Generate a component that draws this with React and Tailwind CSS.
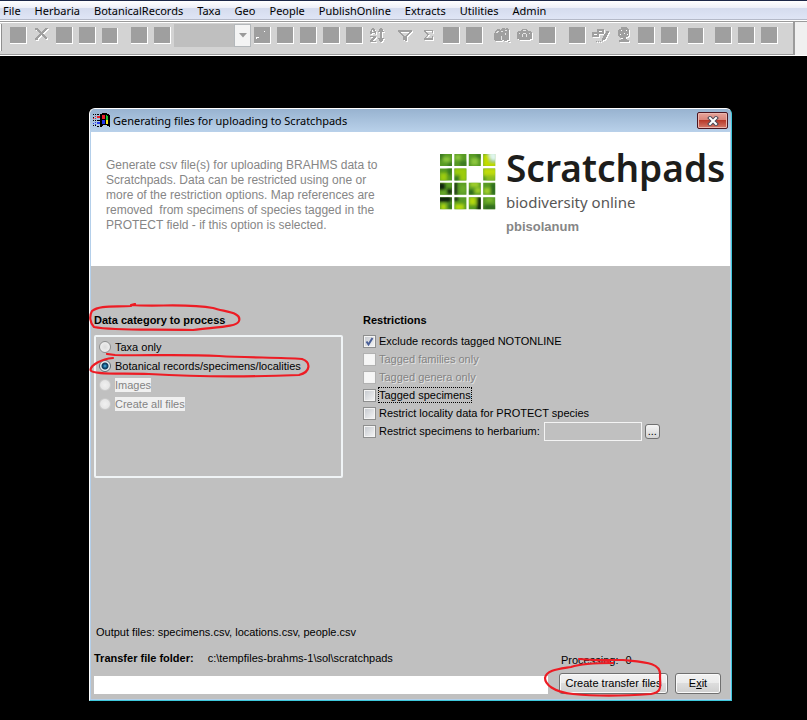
import React from "react";

const MENU = ["File", "Herbaria", "BotanicalRecords", "Taxa", "Geo", "People", "PublishOnline", "Extracts", "Utilities", "Admin"];

/* Disabled glyphs are drawn twice: a white copy one pixel down-right, then the grey one. */
const GLYPHS = {
  cut: <path d="M2 1h3v1h1v1h1v1h1v1h1V4h1V3h1V2h1V1h3v1h-1v1h-1v1h-1v1h-1v1h-1v1h1v1h1v1h1v1h1v2h-2v-1h-1v-1h-1V9h-1V8H8v1H7v1H6v1H5v2H2v-2h1v-1h1V9h1V8h1V7h1V6H6V5H5V4H4V3H2z" fill="currentColor" />,
  sort: (
    <g fill="currentColor">
      <path d="M3 1h2v1h1v2h1v3H6V6H3v1H1V4h1V2h1zM4 3H3v2h2V4H4z" />
      <path d="M1 9h6v2H6v1H5v1H4v1h3v1H1v-2h1v-1h1v-1h1v-1H1z" />
      <path d="M11 1h2v1h1v2h1v1h-2v6h2v1h-1v2h-1v1h-2v-1h-1v-2H9v-1h2V5H9V4h1V2h1z" />
    </g>
  ),
  funnel: <path d="M1 3h14v2h-1v1h-1v1h-1v1h-1v1h-1v5H8v-1H6V9H5V8H4V7H3V6H2V5H1zM4 5v1h1v1h1v1h1v1h2V8h1V7h1V6h1V5z" fill="currentColor" fillRule="evenodd" />,
  sigma: <path d="M4 3h9v3h-1V4H6v1h1v1h1v1h1v1H8v1H7v1H6v1h6V9h1v4H4v-2h1v-1h1V9h1V7H6V6H5V5H4z" fill="currentColor" />,
  find: (
    <g fill="currentColor">
      <path d="M1 6h1V4h1V3h1V2h3v1h1V2h1V1h3v1h1V1h2v1h1v11h-2v1h-3v-1H9v1H2v-1H1z" />
      <path d="M3 5h1V4h2v1H5v1H3zM8 5V4h2v1zM12 4V3h2v1zM8 9h1v4H8zM12 6h1v2h-1z" fill="#e4e4e4" />
      <path d="M15 14h2v1h-2z" />
    </g>
  ),
  camera: (
    <g fill="currentColor">
      <path d="M1 5h1V4h3V3h1V2h5v1h1v1h3v1h1v7h-2v1H3v-1H1z" />
      <path d="M7 6h3v1H7zM6 7h1v3H6zM10 7h1v3h-1zM3 6h1v1H3zM13 6h1v1h-1zM7 3h3v1H7z" fill="#e4e4e4" />
    </g>
  ),
  edit: (
    <g fill="currentColor">
      <path d="M5 2h7v5H7v3H0V5h5zM7 4v1h3V4zM2 7v1h3V7z" fillRule="evenodd" />
      <path d="M14 4h3v2h-1v2h-1v2h-1v2h-1v1h-2v1h-1v-3h1V9h1V7h1V6h1zM4 14h1v1H4zM6 14h1v1H6zM8 14h1v1H8z" />
    </g>
  ),
  globe: (
    <g fill="currentColor">
      <path d="M6 0h6v1h1v1h1v7h-1v1h-2v2h1v1h2v2H4v-2h2v-1h2v-1H5v-1H4V9H3V3h1V2h2z" />
      <path d="M6 3h1v1H6zM11 3h1v1h-1zM9 6h1v1H9zM5 7h1v1H5zM12 7h1v1h-1z" fill="#fff" />
    </g>
  ),
};

const TOOL_GROUPS = [
  { gap: "ml-[8px]", items: ["box", "cut", "box", "box", "small"] },
  { gap: "ml-[12px]", items: ["box", "box"] },
  { gap: "ml-[3px]", items: ["combo"] },
  { gap: "ml-[3px]", items: ["dots", "box", "box", "box", "box", "sort"] },
  { gap: "ml-[11px]", items: ["funnel", "sigma", "box", "box"] },
  { gap: "ml-[10px]", items: ["find", "camera", "box"] },
  { gap: "ml-[13px]", items: ["box", "edit", "globe", "box", "box"] },
  { gap: "ml-[10px]", items: ["small"] },
  { gap: "ml-[10px]", items: ["box", "box", "box"] },
];

function Tool({ kind }) {
  if (kind === "combo") {
    return (
      <div className="flex h-[23px] w-[77px] bg-[#bfbfbf]">
        <button disabled aria-label="Open list" className="ml-auto flex w-[17px] items-center justify-center border border-[#b4b8bb] bg-[#f4f4f4]">
          <svg width="8" height="5" viewBox="0 0 8 5"><path d="M0 0h8L4 4.500z" fill="#9a9a9a" /></svg>
        </button>
      </div>
    );
  }
  if (GLYPHS[kind]) {
    return (
      <button disabled aria-label={kind} className="h-[17px] w-[17px]">
        <svg width="17" height="17" viewBox="0 0 17 17" shapeRendering="crispEdges" className="overflow-visible">
          <g transform="translate(1 1)" className="text-white">{GLYPHS[kind]}</g>
          <g className="text-[#9f9f9f]">{GLYPHS[kind]}</g>
        </svg>
      </button>
    );
  }
  return (
    <button disabled aria-label="Tool" className="flex h-[17px] w-[17px] items-end">
      <span className={(kind === "small" ? "h-[16px] w-[16px]" : "h-[17px] w-[17px]") + " block border-r border-b border-white bg-[#9f9f9f]"}>
        {kind === "dots" && (
          <svg width="16" height="16" viewBox="0 0 16 16"><path d="M2 10h3v1H3v1H2zM10 4h1v1h-1z" fill="#fff" /></svg>
        )}
      </span>
    </button>
  );
}

function WindowsIcon() {
  return (
    <svg width="17" height="15" viewBox="0 0 17 15" shapeRendering="crispEdges">
      <path d="M7 1h2V0h5v1h2v1h1v12h-1v-1h-2v-1h-4v1H9v1H7z" fill="#000" />
      <path d="M9 2h3v4H9z" fill="#e8202a" />
      <path d="M13 2h1v1h1v4h-2z" fill="#1fc437" />
      <path d="M9 7h3v4H9z" fill="#2438e8" />
      <path d="M13 7h2v4h-2z" fill="#f6e81c" />
      <path d="M0 1h1v1H0zM2 1h1v1H2zM4 1h2v1H4zM0 4h1v1H0zM0 7h1v1H0zM2 7h1v1H2zM4 7h3v1H4zM0 12h1v1H0zM2 12h1v1H2zM4 13h2v1H4z" fill="#000" />
      <path d="M2 3h1v1H2zM4 3h3v2H4zM0 5h1v1H0zM2 5h1v1H2z" fill="#e8202a" />
      <path d="M2 9h1v1H2zM4 9h3v2H4zM0 10h1v1H0zM2 11h1v1H2z" fill="#2438e8" />
    </svg>
  );
}

const CELLS = [0, 14.4, 28.8, 43.2];

function Mosaic() {
  return (
    <svg className="mt-[22px] shrink-0" width="56" height="56" viewBox="0 0 56 56" aria-label="Scratchpads logo">
      <defs>
        <clipPath id="tiles">
          {CELLS.map((y, r) => CELLS.map((x, c) => (r === 1 && c === 2 ? null : <rect key={r + "-" + c} x={x} y={y} width="12" height="12" />)))}
        </clipPath>
        <filter id="soft"><feGaussianBlur stdDeviation="1.5" /></filter>
      </defs>
      <g clipPath="url(#tiles)">
        <rect width="56" height="56" fill="#579a24" />
        <g filter="url(#soft)">
          <path d="M-2 -2h6v8h-6zM8 8h6v8H8zM20 7h8v6h-8zM36 0h6v5h-6z" fill="#3a7a22" />
          <path d="M3 3h7v5H3zM15 1h6v5h-6zM31 4h7v7h-7z" fill="#8cc63c" />
          <path d="M43 0h7v13h-7zM50 8h7v5h-7z" fill="#c3dd00" />
          <path d="M48 -2h9v9h-6z" fill="#dff5ee" />
          <path d="M0 19h7v8H0zM14 14h13v7H14zM20 20h7v7h-7z" fill="#9ccc10" />
          <path d="M7 15h5v6H7zM14 22h5v5h-5z" fill="#347a1c" />
          <path d="M43 14h14v8H43z" fill="#c0dc08" />
          <path d="M46 21h10v6H46z" fill="#8fc01c" />
          <path d="M-2 29h7v7h-7zM14 28h3v13h-3zM7 35h5v5H7z" fill="#0c2410" />
          <path d="M20 31h6v8h-6zM1 37h5v4H1z" fill="#6bab2a" />
          <path d="M30 28h9v5h-9zM35 34h6v5h-6zM44 34h6v6h-6z" fill="#a2d02c" />
          <path d="M28 36h6v5h-6zM51 29h5v12h-5z" fill="#2c6b1d" />
          <path d="M-2 42h13v6H-2zM14 43h4v4h-4zM37 43h5v14h-5z" fill="#0c2410" />
          <path d="M1 50h5v6H1zM15 50h9v6h-9zM29 43h7v8h-7z" fill="#b4d80c" />
          <path d="M8 50h5v5H8zM44 51h13v5H44z" fill="#2d6a1e" />
          <path d="M46 44h7v4h-7z" fill="#7eb92a" />
        </g>
      </g>
    </svg>
  );
}

function RedInk({ className, width, height, d }) {
  return (
    <svg className={"pointer-events-none absolute " + className} width={width} height={height} viewBox={"0 0 " + width + " " + height} aria-hidden="true">
      <path d={d} fill="none" stroke="#ed1c24" strokeWidth="2.2" strokeLinecap="round" strokeLinejoin="round" />
    </svg>
  );
}

function Radio({ label, checked, disabled, ink }) {
  return (
    <label className="relative flex h-[19px] items-center gap-[4px]">
      <input
        type="radio"
        name="category"
        defaultChecked={checked}
        disabled={disabled}
        className="h-[12px] w-[12px] shrink-0 appearance-none rounded-full border border-[#8e8f8f] bg-[radial-gradient(circle,#dcdcdc,#f6f6f6)] checked:border-[#5f6a72] checked:bg-[radial-gradient(circle,#4fb8e8_0,#0f4f7c_2px,#123a58_3px,#e8eef2_4px)] disabled:border-[#c9c9c9] disabled:bg-[radial-gradient(circle,#f0f0f0,#e0e0e0)]"
      />
      <span className={disabled ? "bg-[#f0f0f0] leading-[14px] text-[#838383]" : "leading-[14px]"}>{label}</span>
      {ink}
    </label>
  );
}

function Check({ label, checked, disabled, focused }) {
  return (
    <label className="relative flex h-[18px] items-center gap-[2px]">
      <input
        type="checkbox"
        defaultChecked={checked}
        disabled={disabled}
        className="h-[13px] w-[13px] shrink-0 appearance-none border border-[#8e8f8f] bg-[linear-gradient(135deg,#c4c8ce,#f6f6f6)] shadow-[inset_0_0_0_1px_#f4f4f4] disabled:border-[#b1b1b1] disabled:bg-[#f6f6f6] disabled:bg-none"
      />
      {checked && (
        <svg className="pointer-events-none absolute top-[3px] left-0" width="13" height="13" viewBox="0 0 13 13">
          <path d="M3.500 6.500L5.500 9.500L9.500 3" fill="none" stroke="#4a5f97" strokeWidth="2" />
        </svg>
      )}
      <span
        className={
          (focused ? "border-black" : "border-transparent") +
          (disabled ? " text-[#838383] [text-shadow:1px_1px_0_#e4e4e4]" : "") +
          " border border-dotted leading-[14px]"
        }
      >
        {label}
      </span>
    </label>
  );
}

const BUTTON = "h-[21px] rounded-[3px] border border-[#707070] bg-[linear-gradient(#f2f2f2,#ebebeb_50%,#dddddd_50%,#cfcfcf)] text-center shadow-[inset_0_0_0_1px_#fafafa]";

export default function App() {
  return (
    <div className="min-h-screen bg-black pb-[19px] font-['Liberation_Sans',Arial,sans-serif] text-[11px] text-black">
      <nav className="flex h-[21px] items-center gap-[14px] border-t border-b border-t-[#1c2748] border-b-white bg-[linear-gradient(#ffffff,#eef0f8_35%,#d5dcee_38%,#dfe5f5_94%,#b4b9c8_95%)] pl-[3px] font-['Noto_Sans',sans-serif] text-[11px] leading-[18px]">
        {MENU.map((m) => <button key={m}>{m}</button>)}
      </nav>
      <div className="flex h-[35px] border-t border-b border-t-[#9b9b9b] border-b-white bg-[#f0f0f0]">
        <div className="flex min-w-0 flex-1 items-start border-t border-b border-t-white border-b-[#9b9b9b] bg-[#d3d3d3]">
          <div className="mt-px h-[27px] w-[2px] border-r border-[#8f8f8f] bg-white" />
          {TOOL_GROUPS.map((g, i) => (
            <div key={i} className={g.gap + " flex shrink-0 gap-[6px] " + (g.items[0] === "combo" ? "pt-px" : "pt-[4px]")}>
              {g.items.map((k, j) => <Tool key={j} kind={k} />)}
            </div>
          ))}
        </div>
        <div className="w-[14px] border-l-2 border-[#9b9b9b]" />
      </div>

      <main className="mt-[52px] mr-[75px] ml-[89px] flex min-h-[593px] flex-col rounded-t-[6px] border border-t-white border-r-[#3fc8dc] border-b-[#3fc8dc] border-l-white bg-[#c0c0c0] shadow-[inset_1px_0_0_#b4cfea,inset_-1px_0_0_#b4cfea,inset_0_-1px_0_#b4cfea]">
        <header className="flex h-[23px] shrink-0 items-center rounded-t-[5px] bg-[linear-gradient(#98b3d0,#b9d1ea)] pr-[3px] pl-[3px]">
          <WindowsIcon />
          <h1 className="ml-[3px] font-['Noto_Sans',sans-serif] text-[11px] leading-[18px]">Generating files for uploading to Scratchpads</h1>
          <button aria-label="Close" className="ml-auto flex h-[17px] w-[31px] items-center justify-center rounded-[2px] border border-[#4b1520] bg-[linear-gradient(#e6a59c,#d98479_48%,#b8392a_50%,#d4796a)] shadow-[inset_0_0_0_1px_#eab5ae]">
            <svg width="12" height="10" viewBox="0 0 12 10">
              <path d="M3 2L9 8M9 2L3 8" stroke="#4d4a58" strokeWidth="4" strokeLinecap="square" />
              <path d="M3 2L9 8M9 2L3 8" stroke="#fff" strokeWidth="2" strokeLinecap="square" />
            </svg>
          </button>
        </header>

        <section className="mx-px flex h-[134px] shrink-0 justify-between bg-white pr-[6px] pl-[15px]">
          <p className="mt-[26px] w-[300px] text-[12px] leading-[15px] whitespace-pre-line text-[#868686]">
            {"Generate csv file(s) for uploading BRAHMS data to\nScratchpads. Data can be restricted using one or\nmore of the restriction options. Map references are\nremoved \u00a0from specimens of species tagged in the\nPROTECT field - if this option is selected."}
          </p>
          <div className="flex gap-[10px]">
            <Mosaic />
            <div className="w-[218px] whitespace-nowrap">
              <div className="mt-[12px] font-['Noto_Sans',sans-serif] text-[37px] leading-[48px] font-semibold text-[#1d1d1b]">Scratchpads</div>
              <div className="font-['Noto_Sans',sans-serif] text-[15px] leading-[20px] text-[#575756]">biodiversity online</div>
              <div className="mt-[7px] text-[13px] leading-[16px] font-bold text-[#868686]">pbisolanum</div>
            </div>
          </div>
        </section>

        <section className="mt-[46px] flex gap-[20px] pl-[4px]">
          <div className="w-[249px] shrink-0">
            <h2 className="relative leading-[16px] font-bold">
              Data category to process
              <RedInk className="-top-[9px] -left-[7px]" width={158} height={30} d="M44 3C28 4 12 2 5 8C2 13 3 20 7 24C28 28 60 26 106 27C130 24 150 24 152 18C155 9 138 9 126 5C100 0 70 4 44 2L48 1" />
            </h2>
            <div role="radiogroup" aria-label="Data category to process" className="mt-[7px] h-[143px] rounded-[2px] border-2 border-[#f0f4f6] pl-[3px]">
              <Radio label="Taxa only" />
              <Radio
                label="Botanical records/specimens/localities"
                checked
                ink={<RedInk className="-top-[3px] -left-[10px]" width={222} height={25} d="M24 5C12 6 2 12 1.500 17C3 22 30 20 60 21C110 24 160 24 210 22C222 19 222 9 213 6C190 4 160 5 130 3C90 1 50 3 26 2L18 1" />}
              />
              <Radio label="Images" disabled />
              <Radio label="Create all files" disabled />
            </div>
          </div>
          <div>
            <h2 className="leading-[16px] font-bold">Restrictions</h2>
            <div className="mt-[4px]">
              <Check label="Exclude records tagged NOTONLINE" checked />
              <Check label="Tagged families only" disabled />
              <Check label="Tagged genera only" disabled />
              <Check label="Tagged specimens" focused />
              <Check label="Restrict locality data for PROTECT species" />
              <div className="flex h-[18px] items-center gap-[3px]">
                <Check label="Restrict specimens to herbarium:" />
                <input aria-label="Herbarium" className="h-[19px] w-[98px] border border-[#f4f4f4] bg-transparent px-1" />
                <button aria-label="Browse herbaria" className="h-[15px] w-[15px] rounded-[3px] border border-[#707070] bg-[linear-gradient(#f4f4f4,#d4d4d4)] text-[11px] leading-[11px]">...</button>
              </div>
            </div>
          </div>
        </section>

        <footer className="mt-auto pr-[10px] pb-[6px] pl-[4px]">
          <p className="pl-[2px] leading-[16px]">Output files: specimens.csv, locations.csv, people.csv</p>
          <div className="mt-[10px] flex items-end">
            <div className="min-w-0 flex-1">
              <p className="flex gap-[14px] leading-[16px]">
                <b>Transfer file folder:</b>
                <span>c:\tempfiles-brahms-1\sol\scratchpads</span>
              </p>
              <div role="progressbar" aria-label="Transfer progress" className="mt-[10px] h-[18px] bg-white" />
            </div>
            <div className="relative ml-[11px]">
              <p className="flex gap-[7px] pl-[2px] leading-[14px]">
                <span>Processing:</span>
                <span>0</span>
              </p>
              <div className="mt-[6px] flex gap-[7px]">
                <button className={BUTTON + " w-[109px]"}>Create transfer files</button>
                <button className={BUTTON + " w-[46px]"}>E<u>x</u>it</button>
              </div>
              <RedInk className="top-[1px] -left-[16px]" width={122} height={44} d="M54 6L80 6C100 8 119 8 117 22C117 32 120 38 108 40C80 42 50 42 30 40C10 38 2 30 2 24C3 16 16 15 28 13C40 9 56 9 70 9M36 5L66 7" />
            </div>
          </div>
        </footer>
      </main>
    </div>
  );
}
